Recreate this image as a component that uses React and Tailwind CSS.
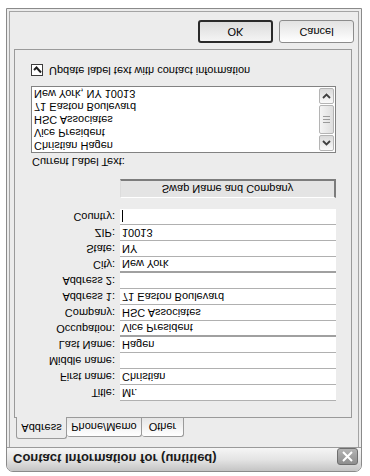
import React from "react";

const fields = [
  { label: "Title:", value: "Mr." },
  { label: "First name:", value: "Christian" },
  { label: "Middle name:", value: "" },
  { label: "Last Name:", value: "Hagen" },
  { label: "Occupation:", value: "Vice President", thick: true },
  { label: "Company:", value: "HSC Associates" },
  { label: "Address 1:", value: "71 Easton Boulevard" },
  { label: "Address 2:", value: "" },
  { label: "City:", value: "New York", thick: true },
  { label: "State:", value: "NY" },
  { label: "ZIP:", value: "10013" },
  { label: "Country:", value: "", cursor: true },
];

const listLines = [
  "Christian Hagen",
  "Vice President",
  "HSC Associates",
  "71 Easton Boulevard",
  "New York, NY 10013",
];

const tabs = [
  { name: "Address", w: "w-[51px]", active: true },
  { name: "Phone/Memo", w: "w-[75px]" },
  { name: "Other", w: "w-[42px]" },
];

const ScrollArrow = ({ up }) => (
  <div className="h-[16px] w-[15px] rounded-[2px] border border-[#b4b4b4] bg-gradient-to-b from-[#fafafa] to-[#dadada] flex items-center justify-center">
    <svg width="9" height="6" viewBox="0 0 9 6">
      <path
        d={up ? "M1 5 L4.5 1.5 L8 5" : "M1 1 L4.5 4.5 L8 1"}
        fill="none"
        stroke="#404040"
        strokeWidth="1.8"
      />
    </svg>
  </div>
);

const App = () => {
  return (
    <div className="w-[370px] h-[476px] bg-white overflow-hidden">
      {/* the whole capture is mirrored top-to-bottom */}
      <div className="w-full h-full -scale-y-100 pt-[4px] pl-[6px] font-['Liberation_Sans',Arial,sans-serif] text-[11px] text-black">
        <div className="w-[356px] h-[464px] flex flex-col border border-[#8a8a8a] rounded-t-[7px] bg-[#ececec] overflow-hidden">
          {/* title bar */}
          <div className="h-[24px] shrink-0 flex items-start justify-between pl-[6px] pr-[3px] border-b border-[#9a9a9a] bg-gradient-to-b from-[#c4c4c4] via-[#e4e4e4] to-[#f6f6f6]">
            <span className="mt-[5px] text-[13px] leading-[15px] font-bold text-[#1a1a1a]">
              Contact Information for (untitled)
            </span>
            <div className="mt-[6px] w-[21px] h-[17px] rounded-[3px] border border-[#6e6e6e] bg-gradient-to-b from-[#8e8e8e] to-[#b4b4b4] flex items-center justify-center">
              <svg width="13" height="11" viewBox="0 0 13 11">
                <path d="M2 1 L11 10 M11 1 L2 10" stroke="#ffffff" strokeWidth="2" />
              </svg>
            </div>
          </div>

          {/* body frame */}
          <div className="flex-1 flex flex-col mx-[2px] mb-[2px] border-x border-b border-[#a4a4a4] pt-[8px]">
            {/* tabs */}
            <div className="flex items-end h-[21px] ml-[6px] relative z-10">
              {tabs.map((t) => (
                <div
                  key={t.name}
                  className={
                    t.active
                      ? `${t.w} h-[22px] -mb-px flex items-center justify-center border-x border-t border-[#9a9a9a] rounded-t-[3px] bg-[#ececec]`
                      : `${t.w} h-[19px] flex items-center justify-center border-r border-t border-[#9a9a9a] rounded-t-[3px] bg-gradient-to-b from-white to-[#e6e6e6]`
                  }
                >
                  {t.name}
                </div>
              ))}
            </div>

            {/* tab panel */}
            <div className="ml-[4px] w-[338px] h-[369px] border border-[#9a9a9a] bg-[#ececec] pt-[16px]">
              <div className="flex flex-col">
                {fields.map((f) => (
                  <div key={f.label} className="flex h-[16px]">
                    <div className="w-[101px] text-right leading-[16px] pr-[1px]">{f.label}</div>
                    <div
                      className={
                        f.thick
                          ? "ml-[4px] w-[216px] h-[16px] bg-white border-t-2 border-[#a0a0a0] pl-[2px] leading-[14px] flex items-center"
                          : "ml-[4px] w-[216px] h-[16px] bg-white border-t border-[#b0b0b0] pl-[2px] leading-[15px] flex items-center"
                      }
                    >
                      {f.cursor && <span className="w-px h-[12px] bg-black" />}
                      {f.value}
                    </div>
                  </div>
                ))}
              </div>

              <div className="mt-[11px] ml-[105px] w-[216px] h-[19px] flex items-center justify-center border border-t-white border-l-[#dcdcdc] border-r-2 border-b-2 border-r-[#7c7c7c] border-b-[#7c7c7c] bg-[#e4e4e4]">
                Swap Name and Company
              </div>

              <div className="mt-[11px] ml-[17px] h-[13px] leading-[13px]">Current Label Text:</div>

              <div className="mt-[2px] ml-[16px] w-[305px] h-[67px] border border-[#828282] bg-white flex">
                <div className="flex-1 pl-[2px]">
                  {listLines.map((l) => (
                    <div key={l} className="h-[13px] leading-[13px]">{l}</div>
                  ))}
                </div>
                <div className="w-[16px] flex flex-col gap-px py-px pr-px">
                  <ScrollArrow up />
                  <div className="flex-1 rounded-[2px] border border-[#b4b4b4] bg-gradient-to-r from-[#f4f4f4] to-[#dedede] flex flex-col items-center justify-center gap-[2px]">
                    <span className="w-[7px] h-px bg-[#9a9a9a]" />
                    <span className="w-[7px] h-px bg-[#9a9a9a]" />
                    <span className="w-[7px] h-px bg-[#9a9a9a]" />
                  </div>
                  <ScrollArrow />
                </div>
              </div>

              <div className="mt-[9px] ml-[16px] flex items-center gap-[6px] h-[13px]">
                <div className="w-[12px] h-[12px] border border-[#3c3c3c] bg-white flex items-center justify-center">
                  <svg width="9" height="8" viewBox="0 0 9 8">
                    <path d="M1 4 L3.5 6.5 L8 1.5" fill="none" stroke="#1e1e1e" strokeWidth="2" />
                  </svg>
                </div>
                <span className="leading-[13px]">Update label text with contact information</span>
              </div>
            </div>

            {/* buttons */}
            <div className="mt-[6px] flex justify-end gap-[6px] pr-[4px]">
              <div className="w-[75px] h-[23px] flex items-center justify-center rounded-[3px] border-2 border-[#2a2a2a] bg-gradient-to-b from-[#f4f4f4] to-[#dcdcdc]">
                OK
              </div>
              <div className="w-[75px] h-[23px] flex items-center justify-center rounded-[3px] border border-[#8c8c8c] bg-gradient-to-b from-white to-[#e2e2e2]">
                Cancel
              </div>
            </div>
          </div>
        </div>
      </div>
    </div>
  );
};

export default App;
